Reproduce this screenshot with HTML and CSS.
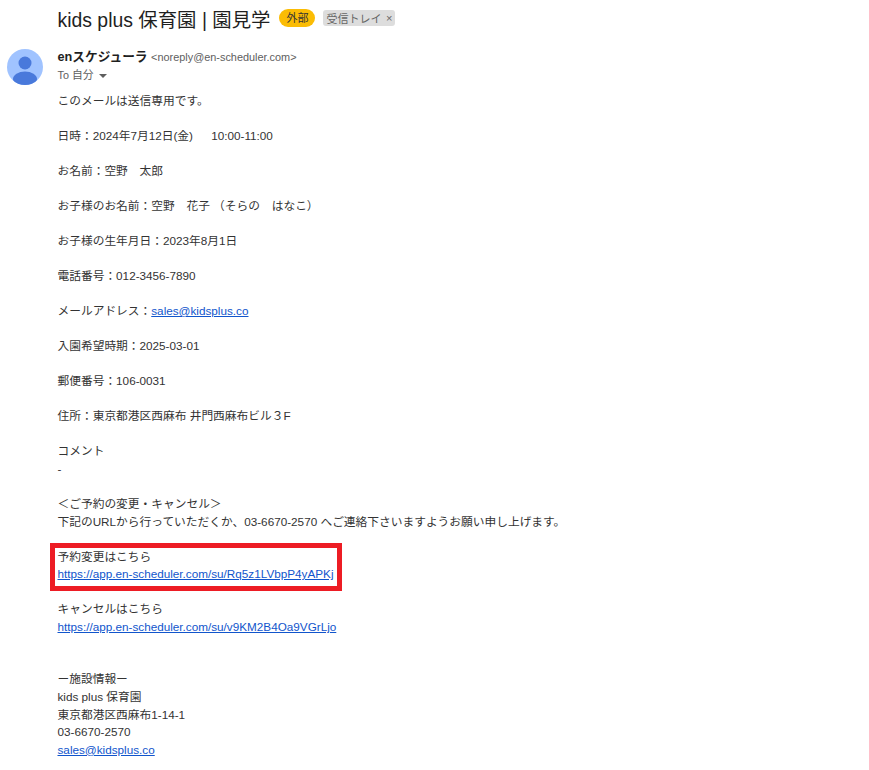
FILE: index.html
```html
<!DOCTYPE html>
<html lang="ja">
<head>
<meta charset="utf-8">
<title>kids plus 保育園 | 園見学</title>
<link rel="stylesheet" href="styles.css">
</head>
<body>
<div class="page">
  <header class="subject">
    <h1 class="subject-title">kids plus 保育園 | 園見学</h1>
    <span class="tag-external">外部</span>
    <span class="tag-inbox">受信トレイ<span class="tag-x">×</span></span>
  </header>
  <section class="message">
    <svg class="avatar" viewBox="0 0 36 36" aria-hidden="true">
      <defs><clipPath id="av"><circle cx="18" cy="18" r="18"/></clipPath></defs>
      <circle cx="18" cy="18" r="18" fill="#a0c3ff"/>
      <g clip-path="url(#av)" fill="#4979db">
        <circle cx="18" cy="14" r="6.5"/>
        <ellipse cx="18" cy="30" rx="12" ry="7.5"/>
      </g>
    </svg>
    <div class="content">
      <div class="from"><b class="from-name">enスケジューラ</b> <span class="from-addr">&lt;noreply@en-scheduler.com&gt;</span></div>
      <div class="to">To 自分 <span class="caret"></span></div>
      <div class="body">
        <p>このメールは送信専用です。</p>
        <p>日時：2024年7月12日(金)　&nbsp; 10:00-11:00</p>
        <p>お名前：空野　太郎</p>
        <p>お子様のお名前：空野　花子 （そらの　はなこ）</p>
        <p>お子様の生年月日：2023年8月1日</p>
        <p>電話番号：012-3456-7890</p>
        <p>メールアドレス：<a href="#">sales@kidsplus.co</a></p>
        <p>入園希望時期：2025-03-01</p>
        <p>郵便番号：106-0031</p>
        <p>住所：東京都港区西麻布 井門西麻布ビル３F</p>
        <p>コメント<br>-</p>
        <p>＜ご予約の変更・キャンセル＞<br>下記のURLから行っていただくか、03-6670-2570 へご連絡下さいますようお願い申し上げます。</p>
        <p class="highlighted">予約変更はこちら<br><a href="#">https://app.en-scheduler.com/su/Rq5z1LVbpP4yAPKj</a><span class="red-box"></span></p>
        <p>キャンセルはこちら<br><a href="#">https://app.en-scheduler.com/su/v9KM2B4Oa9VGrLjo</a></p>
        <p class="facility">ー施設情報ー<br>kids plus 保育園<br>東京都港区西麻布1-14-1<br>03-6670-2570<br><a href="#">sales@kidsplus.co</a></p>
      </div>
    </div>
  </section>
</div>
</body>
</html>
```
FILE: styles.css
```css
html, body {
  margin: 0;
  background: #fff;
  overflow: hidden;
}
.page {
  height: 770px;
  overflow: hidden;
  font-family: "Liberation Sans", "Noto Sans CJK JP", sans-serif;
  color: #333;
}
.subject {
  display: flex;
  align-items: center;
  height: 36px;
  padding-left: 57.5px;
}
.subject-title {
  margin: 0;
  font-size: 19.4px;
  font-weight: 400;
  color: #1f1f1f;
}
.tag-external {
  margin-left: 9px;
  width: 36px;
  height: 18px;
  border-radius: 9px;
  background: #fbbc04;
  font-size: 11px;
  line-height: 18px;
  text-align: center;
  color: #333;
}
.tag-inbox {
  display: flex;
  align-items: center;
  justify-content: space-between;
  box-sizing: border-box;
  margin-left: 8px;
  width: 72px;
  height: 16px;
  padding: 0 3px;
  border-radius: 3px;
  background: #ddd;
  font-size: 11px;
  color: #666;
}
.tag-x {
  font-size: 11px;
}
.message {
  display: flex;
  align-items: flex-start;
  padding: 13px 0 0 7px;
}
.avatar {
  flex: none;
  width: 36px;
  height: 36px;
}
.content {
  margin-left: 14.5px;
  flex: 1;
}
.from {
  font-size: 12.7px;
  line-height: 17px;
}
.from-name {
  color: #1f1f1f;
}
.from-addr {
  font-size: 10.9px;
  color: #5e5e5e;
}
.to {
  font-size: 10.8px;
  line-height: 18px;
  color: #5e5e5e;
}
.caret {
  display: inline-block;
  width: 0;
  height: 0;
  margin-left: 2px;
  vertical-align: 1px;
  border: 4px solid transparent;
  border-bottom-width: 0;
  border-top-color: #5e5e5e;
}
.body {
  margin-top: 7.5px;
  font-size: 11.72px;
  line-height: 17.55px;
}
.body p {
  margin: 0 0 17.55px;
}
.body a {
  color: #1155cc;
}
.highlighted {
  position: relative;
}
.red-box {
  position: absolute;
  left: -7.5px;
  top: -4.5px;
  width: 281.5px;
  height: 37.5px;
  border: 5px solid #ed1c24;
}
.body .facility {
  margin-top: 35px;
}
```
